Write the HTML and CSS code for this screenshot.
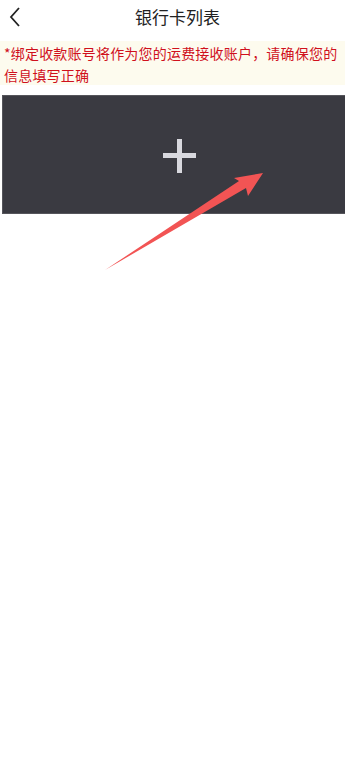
FILE: index.html
```html
<!DOCTYPE html>
<html lang="zh-CN">
<head>
  <meta charset="UTF-8">
  <title>银行卡列表</title>
  <link rel="stylesheet" href="styles.css">
</head>
<body>

  <div class="nav-bar">
    <span class="nav-back">
      <svg width="12" height="20" viewBox="0 0 12 20"><path d="M10 1 L2 10 L10 19" fill="none" stroke="#222" stroke-width="1.8"/></svg>
    </span>
    <h1>银行卡列表</h1>
  </div>

  <div class="notice">*绑定收款账号将作为您的运费接收账户，请确保您的信息填写正确</div>

  <div class="card-list">
    <div class="card-add">
      <span class="plus"></span>
    </div>
  </div>

  <svg class="arrow" width="345" height="300" viewBox="0 0 345 300">
    <path d="M105 270 L239 181 L234 178 L263 173 L248 196 L246 188 Z" fill="#f25454"/>
  </svg>

</body>
</html>
```

FILE: styles.css
```css
body {
  margin: 0;
  font-family: "Noto Sans CJK SC", "Noto Sans", sans-serif;
  background: #fff;
  width: 345px;
  height: 764px;
  position: relative;
  overflow: hidden;
}

.nav-bar {
  height: 40px;
  display: flex;
  align-items: center;
  justify-content: center;
  position: relative;
  padding-left: 10px;
}

.nav-bar h1 {
  margin: 0;
  font-size: 17px;
  font-weight: normal;
  color: #222;
  margin-top: -8px;
}

.nav-back {
  position: absolute;
  left: 9px;
  top: 7px;
}

.notice {
  background: #fdfbee;
  color: #d0101c;
  font-size: 14px;
  line-height: 22px;
  padding: 1px 4px 0 4px;
  height: 43px;
  letter-spacing: 0.2px;
  margin-top: 1px;
}

.card-list {
  padding: 10px 0 0 2px;
}

.card-add {
  height: 117px;
  background: #3a3a41;
  border: 1px solid #55555b;
  border-right: none;
  display: flex;
  align-items: center;
  justify-content: center;
  padding-left: 10px;
}

.plus {
  width: 33px;
  height: 34px;
  position: relative;
  margin-top: 2px;
}

.plus::before, .plus::after {
  content: "";
  position: absolute;
  background: #d8d8de;
}

.plus::before {
  left: 0;
  right: 0;
  top: 14px;
  height: 5px;
}

.plus::after {
  top: 0;
  bottom: 0;
  left: 14px;
  width: 5px;
}

.arrow {
  position: absolute;
  left: 0;
  top: 0;
}
```
